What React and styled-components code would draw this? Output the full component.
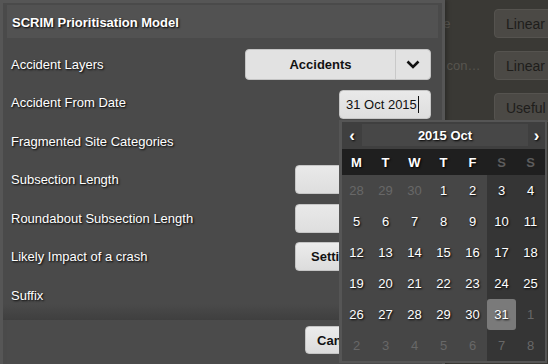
import React from "react";
import styled, { createGlobalStyle } from "styled-components";

const GlobalStyle = createGlobalStyle`
  body {
    margin: 0;
    background: #3a3935;
    font-family: "Liberation Sans", Arial, sans-serif;
  }
`;

const Screen = styled.div`
  position: relative;
  width: 548px;
  height: 364px;
  overflow: hidden;
  background: #3a3935;
`;

/* page behind the modal, dimmed */
const Backdrop = styled.div`
  display: flex;
  flex-direction: column;
  gap: 13px;
  padding-top: 9px;
`;

const BackdropRow = styled.div`
  display: grid;
  grid-template-columns: 315px 173px 1fr;
  align-items: center;
  height: 29px;
`;

const BackdropLabel = styled.span`
  grid-column: 2;
  padding-right: 5px;
  color: #57554f;
  font-size: 13px;
  white-space: nowrap;
  overflow: hidden;
  text-overflow: ellipsis;
`;

const BackdropButton = styled.div`
  grid-column: 3;
  margin-left: 6px;
  width: 90px;
  height: 29px;
  box-sizing: border-box;
  padding-left: 11px;
  display: flex;
  align-items: center;
  background: #4b4945;
  border: 1px solid #55534f;
  border-radius: 4px;
  color: #1e1d1b;
  font-size: 14px;
`;

const Dialog = styled.div`
  position: absolute;
  top: 0;
  left: 0;
  width: 445px;
  box-sizing: border-box;
  border: 3px solid #565656;
  border-bottom: none;
  background: #4a4a4a;
  padding-top: 2px;
  box-shadow: 2px 0 4px rgba(0, 0, 0, 0.25);
`;

const Header = styled.div`
  margin: 0 4px;
  height: 33px;
  padding: 1px 0 0 5px;
  box-sizing: border-box;
  display: flex;
  align-items: center;
  background: #525252;
  color: #fff;
  font-size: 13px;
  font-weight: bold;
  text-shadow: 1px 1px 2px #000;
`;

const Body = styled.div`
  padding: 7px 11px 5.5px 8px;
  background: linear-gradient(to bottom, #4a4a4a calc(100% - 16px), #3f3f3f 100%);
`;

const Row = styled.div`
  display: grid;
  grid-template-columns: 1fr auto;
  align-items: center;
  height: 38.5px;
`;

const Label = styled.span`
  color: #fff;
  font-size: 13px;
  text-shadow: 1px 1px 2px #000;
`;

const Select = styled.div`
  display: flex;
  width: 186px;
  height: 31px;
  box-sizing: border-box;
  background: #e2e2e2;
  border: 1px solid #c4c4c4;
  border-radius: 4px;
`;

const SelectValue = styled.div`
  flex: 1;
  display: flex;
  align-items: center;
  justify-content: center;
  border-right: 1px solid #c9c9c9;
  color: #111;
  font-size: 13px;
  font-weight: bold;
`;

const SelectArrow = styled.div`
  width: 34px;
  display: flex;
  align-items: center;
  justify-content: center;
`;

const Field = styled.div`
  position: relative;
  width: ${(p) => p.$width}px;
  height: 29px;
  margin-top: ${(p) => p.$shift || 0}px;
  box-sizing: border-box;
  padding-left: 6px;
  display: flex;
  align-items: center;
  background: linear-gradient(#e9e9e9, #dedede);
  border: 1px solid #c6c6c6;
  border-radius: 4px;
  color: #111;
  font-size: 13px;
`;

const Caret = styled.span`
  width: 1px;
  height: 17px;
  margin-left: 1px;
  background: #111;
`;

const Button = styled.div`
  width: ${(p) => (p.$width ? `${p.$width}px` : "auto")};
  height: ${(p) => p.$height || 29}px;
  box-sizing: border-box;
  padding: 0 ${(p) => p.$pad || 15}px;
  display: flex;
  align-items: center;
  background: linear-gradient(#ececec, #dcdcdc);
  border: 1px solid #c4c4c4;
  border-radius: 4px;
  color: #111;
  font-size: 13px;
  font-weight: bold;
  white-space: nowrap;
`;

const Footer = styled.div`
  margin: 0 4px;
  height: 50px;
  padding: 6px 12px 0 0;
  box-sizing: border-box;
  display: flex;
  justify-content: flex-end;
  gap: 5px;
  background: #4b4b4b;
`;

/* date picker popup */
const Picker = styled.div`
  position: absolute;
  top: calc(100% + 2px);
  left: -1px;
  z-index: 5;
  width: 208px;
  box-sizing: border-box;
  border: 2px solid #555;
  border-left-width: 3px;
  background: #3f3f3f;
`;

const PickerNav = styled.div`
  display: grid;
  grid-template-columns: 20px 1fr 17px;
  height: 27px;
  color: #fff;
  text-shadow: 1px 1px 2px #000;
`;

const NavArrow = styled.span`
  display: flex;
  align-items: center;
  justify-content: center;
  font-size: 17px;
  font-weight: bold;
`;

const NavTitle = styled.span`
  margin: 2px 0 3px;
  display: flex;
  align-items: center;
  justify-content: center;
  background: #474747;
  font-size: 13px;
  font-weight: bold;
`;

const Grid = styled.div`
  display: grid;
  grid-template-columns: repeat(7, 29px);
`;

const WeekDay = styled.span`
  height: 26px;
  display: flex;
  align-items: center;
  justify-content: center;
  background: #1f1f1f;
  color: ${(p) => (p.$weekend ? "#5c5c5c" : "#fff")};
  font-size: 13px;
  font-weight: bold;
  text-shadow: ${(p) => (p.$weekend ? "none" : "1px 1px 2px #000")};
`;

const DayCell = styled.span`
  height: 31px;
  display: flex;
  background: ${(p) => (p.$weekend ? "#353535" : "#464646")};
`;

const DayNum = styled.span`
  flex: 1;
  display: flex;
  align-items: center;
  justify-content: center;
  border-radius: 3px;
  background: ${(p) => (p.$selected ? "#7a7a7a" : "transparent")};
  color: ${(p) => (p.$muted ? "#686868" : "#fff")};
  font-size: 13px;
  text-shadow: ${(p) => (p.$muted ? "none" : "1px 1px 2px #000")};
`;

const Chevron = () => (
  <svg width="14" height="9" viewBox="0 0 14 9">
    <polyline points="1.5,1.5 7,7 12.5,1.5" fill="none" stroke="#111" strokeWidth="2.6" />
  </svg>
);

const weekDays = ["M", "T", "W", "T", "F", "S", "S"];

const days = [
  ...[28, 29, 30].map((d) => ({ d, muted: true })),
  ...Array.from({ length: 31 }, (_, i) => ({ d: i + 1 })),
  ...Array.from({ length: 8 }, (_, i) => ({ d: i + 1, muted: true })),
];

function DatePicker() {
  return (
    <Picker>
      <PickerNav>
        <NavArrow>‹</NavArrow>
        <NavTitle>2015 Oct</NavTitle>
        <NavArrow>›</NavArrow>
      </PickerNav>
      <Grid>
        {weekDays.map((w, i) => (
          <WeekDay key={i} $weekend={i > 4}>{w}</WeekDay>
        ))}
        {days.map((day, i) => (
          <DayCell key={i} $weekend={i % 7 > 4}>
            <DayNum $muted={day.muted} $selected={!day.muted && day.d === 31}>
              {day.d}
            </DayNum>
          </DayCell>
        ))}
      </Grid>
    </Picker>
  );
}

export default function App() {
  return (
    <Screen>
      <GlobalStyle />
      <Backdrop>
        <BackdropRow>
          <BackdropLabel>Crash Rate Curve Type</BackdropLabel>
          <BackdropButton>Linear</BackdropButton>
        </BackdropRow>
        <BackdropRow>
          <BackdropLabel>Skid Resistance Level condition</BackdropLabel>
          <BackdropButton>Linear</BackdropButton>
        </BackdropRow>
        <BackdropRow>
          <BackdropLabel />
          <BackdropButton>Useful</BackdropButton>
        </BackdropRow>
      </Backdrop>

      <Dialog>
        <Header>SCRIM Prioritisation Model</Header>
        <Body>
          <Row>
            <Label>Accident Layers</Label>
            <Select>
              <SelectValue>Accidents</SelectValue>
              <SelectArrow><Chevron /></SelectArrow>
            </Select>
          </Row>
          <Row>
            <Label>Accident From Date</Label>
            <Field $width={92} $shift={4}>
              31 Oct 2015<Caret />
              <DatePicker />
            </Field>
          </Row>
          <Row>
            <Label>Fragmented Site Categories</Label>
            <Field $width={92} />
          </Row>
          <Row>
            <Label>Subsection Length</Label>
            <Field $width={136} />
          </Row>
          <Row>
            <Label>Roundabout Subsection Length</Label>
            <Field $width={136} />
          </Row>
          <Row>
            <Label>Likely Impact of a crash</Label>
            <Button $width={136}>Settings</Button>
          </Row>
          <Row>
            <Label>Suffix</Label>
            <Field $width={92} />
          </Row>
        </Body>
        <Footer>
          <Button $height={28} $pad={11}>Cancel</Button>
          <Button $height={28} $pad={11}>Run</Button>
        </Footer>
      </Dialog>
    </Screen>
  );
}
